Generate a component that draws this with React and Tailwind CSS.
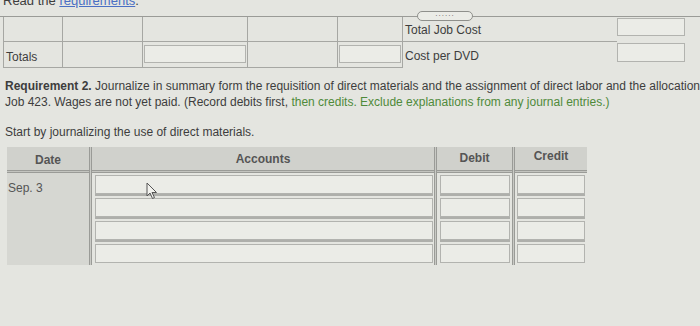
const line = "border-[#a6a7a3]";

function Input({ className = "" }) {
  return <div className={`border border-[#b2b3af] bg-[#ebece7] ${className}`} />;
}

function VDouble() {
  return <div className="w-[3px] self-stretch border-x border-[#9a9b97] bg-[#c9cac5]" />;
}

function HDouble() {
  return <div className="h-[3px] border-y border-[#9a9b97] bg-[#c3c4bf]" />;
}

function InputColumn({ title, ml, mr, titleClass = "" }) {
  const rows = [0, 1, 2, 3];
  return (
    <div className="flex flex-1 flex-col">
      <div className={`flex h-[23px] items-center justify-center bg-[#d0d1cc] text-[12px] font-bold text-[#555] ${titleClass}`}>
        {title}
      </div>
      <HDouble />
      <div className="flex flex-col">
        {rows.map((r) => (
          <div key={r} className={`flex h-[23px] flex-col ${ml} ${mr}`}>
            <Input className="mt-[2px] h-[19px]" />
            {r < 3 && <div className="h-[2px] bg-[#aeafab]" />}
          </div>
        ))}
      </div>
    </div>
  );
}

export default function App() {
  return (
    <div className="relative h-[326px] w-[700px] overflow-hidden bg-[#e4e5e0] font-['Liberation_Sans',Arial,sans-serif] text-[#3d3d3d]">
      {/* Read the requirements */}
      <div className="h-[16px] overflow-hidden">
        <div className="-mt-[7px] pl-[3px] text-[13px] leading-[16px]">
          Read the <span className="text-[#4a6fc4] underline">requirements</span>.
        </div>
      </div>

      {/* separator with handle */}
      <div className="relative h-px bg-[#9a9b97]">
        <div className="absolute left-[417px] top-[-5px] flex h-[10px] w-[56px] items-center justify-center rounded-[5px] border border-[#8f908c] bg-[#ebece7] text-[8px] leading-none tracking-[1px] text-[#666]">
          <span className="-mt-[4px]">......</span>
        </div>
      </div>

      {/* top table */}
      <div className="flex h-[51px]">
        <div className={`ml-[3px] grid w-[399px] grid-cols-[59px_80px_105px_90px_65px] grid-rows-[25px_26px] border-b border-l ${line}`}>
          <div className={`border-b border-r ${line}`} />
          <div className={`border-b border-r ${line}`} />
          <div className={`border-b border-r ${line}`} />
          <div className={`border-b border-r ${line}`} />
          <div className={`border-b border-r ${line}`} />
          <div className={`flex items-center border-r pl-[2px] pt-[4px] text-[12px] ${line}`}>Totals</div>
          <div className={`border-r ${line}`} />
          <div className={`border-r pl-[1px] pt-[3px] pr-[1px] ${line}`}>
            <Input className="h-[18px] w-full" />
          </div>
          <div className={`border-r ${line}`} />
          <div className={`border-r pl-[1px] pt-[3px] pr-[1px] ${line}`}>
            <Input className="h-[18px] w-full" />
          </div>
        </div>
        <div className="flex flex-1 flex-col">
          <div className="flex h-[25px]">
            <div className={`flex h-full w-[215px] items-center border-b pl-[3px] pt-[2px] text-[12px] ${line}`}>Total Job Cost</div>
            <Input className="mt-[1px] h-[18px] w-[68px]" />
          </div>
          <div className="flex h-[26px]">
            <div className="flex h-full w-[215px] items-center pl-[3px] pt-[2px] text-[12px]">Cost per DVD</div>
            <Input className="mt-[1px] h-[19px] w-[68px]" />
          </div>
        </div>
      </div>

      {/* requirement text */}
      <div className="mt-[10px] whitespace-nowrap pl-[5px] text-[12px] leading-[16px]">
        <div>
          <span className="font-bold">Requirement 2.</span> Journalize in summary form the requisition of direct materials and the assignment of direct labor and the allocation of manufacturing overhead to
        </div>
        <div>
          Job 423. Wages are not yet paid. (Record debits first, <span className="text-[#4f8a3a]">then credits. Exclude explanations from any journal entries.)</span>
        </div>
      </div>
      <div className="mt-[14px] pl-[5px] text-[12px] leading-[16px]">Start by journalizing the use of direct materials.</div>

      {/* journal table */}
      <div className="ml-[7px] mt-[7px] flex h-[118px] w-[580px]">
        <div className="flex w-[82px] flex-col">
          <div className="flex h-[23px] items-center justify-center bg-[#d0d1cc] pt-[2px] text-[12px] font-bold text-[#555]">Date</div>
          <HDouble />
          <div className="flex-1 bg-[#d6d7d2] pl-[1px] pt-[6px] text-[12px] text-[#555]">Sep. 3</div>
        </div>
        <VDouble />
        <div className="flex w-[342px]">
          <InputColumn title="Accounts" ml="ml-[3px]" mr="mr-[1px]" />
        </div>
        <VDouble />
        <div className="flex w-[75px]">
          <InputColumn title="Debit" ml="ml-[3px]" mr="mr-[2px]" titleClass="pb-[1px]" />
        </div>
        <VDouble />
        <div className="flex w-[72px]">
          <InputColumn title="Credit" ml="ml-[2px]" mr="mr-[2px]" titleClass="pb-[5px]" />
        </div>
      </div>

      {/* mouse cursor */}
      <svg className="absolute left-[146px] top-[182px]" width="12" height="18" viewBox="0 0 12 18">
        <path d="M1 1 L1 14 L4 11 L6.5 16.5 L8.5 15.5 L6 10.5 L10.5 10.5 Z" fill="#f2f2ee" stroke="#555" strokeWidth="1" strokeLinejoin="round" />
      </svg>
    </div>
  );
}
